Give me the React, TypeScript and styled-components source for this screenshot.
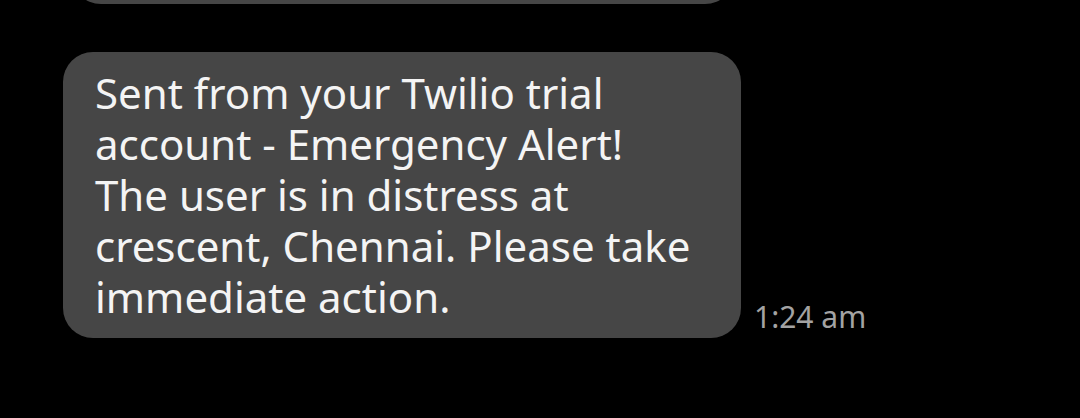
import React from "react";
import styled, { createGlobalStyle } from "styled-components";

const Global = createGlobalStyle`
  html, body { margin: 0; padding: 0; background: #000; }
  body { width: 1080px; height: 418px; overflow: hidden; font-family: "Noto Sans", "Open Sans", sans-serif; }
`;

const Thread = styled.div`
  display: flex;
  flex-direction: column;
  gap: 48px;
  padding-left: 63px;
`;

const Row = styled.div`
  display: flex;
  align-items: flex-end;
  gap: 13px;
`;

const Bubble = styled.div<{ $clipped?: boolean }>`
  box-sizing: border-box;
  width: ${(p) => (p.$clipped ? "664px" : "678px")};
  margin-left: ${(p) => (p.$clipped ? "8px" : "0")};
  background: #464646;
  border-radius: 30px;
  padding: 15px 20px 16px 32px;
  color: #f4f4f4;
  font-size: 42px;
  line-height: 51px;
  white-space: nowrap;
  ${(p) => (p.$clipped ? "height: 60px; margin-top: -56px;" : "")}
`;

const Line = styled.div``;

const Time = styled.span`
  color: #a3a3a3;
  font-size: 30px;
  line-height: 34px;
  padding-bottom: 4px;
`;

const lines = [
  "Sent from your Twilio trial",
  "account - Emergency Alert!",
  "The user is in distress at",
  "crescent, Chennai. Please take",
  "immediate action.",
];

export default function App() {
  return (
    <>
      <Global />
      <Thread>
        <Row>
          <Bubble $clipped />
        </Row>
        <Row>
          <Bubble>
            {lines.map((l) => (
              <Line key={l}>{l}</Line>
            ))}
          </Bubble>
          <Time>1:24 am</Time>
        </Row>
      </Thread>
    </>
  );
}
